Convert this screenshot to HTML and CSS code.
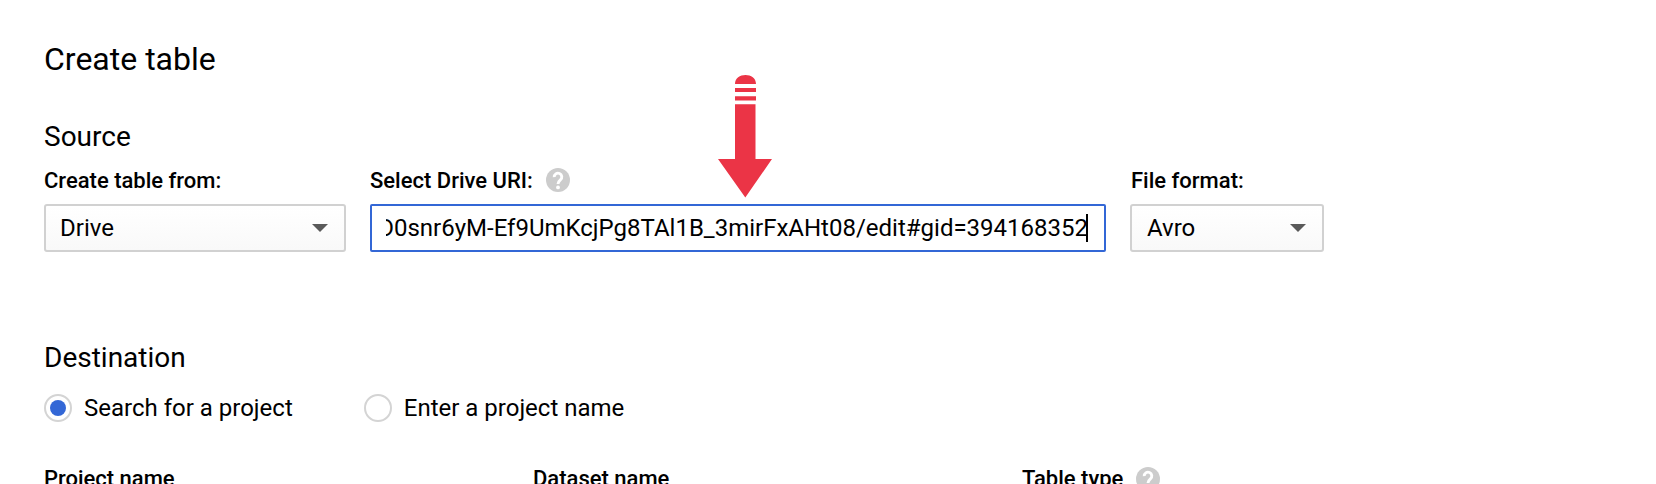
FILE: index.html
```html
<!DOCTYPE html>
<html lang="en">
<head>
<meta charset="utf-8">
<title>Create table</title>
<link rel="stylesheet" href="styles.css">
</head>
<body>
<main class="page">
  <h1 class="title">Create table</h1>
  <section class="source">
    <h2 class="heading">Source</h2>
    <div class="fields">
      <div class="field field-from">
        <div class="label">Create table from:</div>
        <div class="select"><span>Drive</span><svg class="caret-down" viewBox="0 0 16 8"><path d="M0 0h16L8 8z"/></svg></div>
      </div>
      <div class="field field-uri">
        <div class="label">Select Drive URI:
          <svg class="help" viewBox="0 0 24 24"><circle cx="12" cy="12" r="12"/><path d="M8.200 9.200a3.800 3.800 0 1 1 6.200 2.700C13 13.100 12 13.800 12 16"/><circle class="dot" cx="12" cy="19.400" r="1.900"/></svg>
        </div>
        <div class="input"><div class="value"><span class="uri">D0snr6yM-Ef9UmKcjPg8TAl1B_3mirFxAHt08/edit#gid=394168352</span><i class="cursor"></i></div></div>
        <svg class="arrow" viewBox="0 0 54 123"><path d="M17 9C17 3 22 0 27.500 0S38 3 38 9zM17 13h21v4H17zM17 21.300h21v4.300H17zM17 29.300h20.500V84H54L27.300 122.500 0 84h17z"/></svg>
      </div>
      <div class="field field-format">
        <div class="label">File format:</div>
        <div class="select"><span>Avro</span><svg class="caret-down" viewBox="0 0 16 8"><path d="M0 0h16L8 8z"/></svg></div>
      </div>
    </div>
  </section>
  <section class="destination">
    <h2 class="heading">Destination</h2>
    <div class="radios">
      <div class="option"><span class="radio checked"></span><span>Search for a project</span></div>
      <div class="option"><span class="radio"></span><span>Enter a project name</span></div>
    </div>
    <div class="columns">
      <div class="label">Project name</div>
      <div class="label">Dataset name</div>
      <div class="label">Table type
        <svg class="help" viewBox="0 0 24 24"><circle cx="12" cy="12" r="12"/><path d="M8.200 9.200a3.800 3.800 0 1 1 6.200 2.700C13 13.100 12 13.800 12 16"/><circle class="dot" cx="12" cy="19.400" r="1.900"/></svg>
      </div>
    </div>
  </section>
</main>
</body>
</html>
```
FILE: styles.css
```css
* { box-sizing: border-box; }
body {
  margin: 0;
  background: #fff;
  color: #000;
  font-family: Roboto, sans-serif;
  font-size: 24px;
  overflow: hidden;
}
.page { height: 484px; padding: 39px 44px 0; overflow: hidden; }
.title { margin: 0; font-size: 32px; line-height: 40px; font-weight: 400; }
.heading { margin: 0; font-size: 28px; line-height: 32px; font-weight: 400; }
.source { margin-top: 42px; }
.fields { display: flex; gap: 24px; margin-top: 13px; }
.field-from { width: 302px; }
.field-uri { width: 736px; position: relative; }
.field-format { width: 194px; }
.label {
  display: flex;
  align-items: center;
  gap: 13px;
  height: 28px;
  font-size: 22px;
  line-height: 28px;
  font-weight: 500;
  white-space: nowrap;
}
.help { width: 24px; height: 24px; fill: #ccc; }
.help path { fill: none; stroke: #fff; stroke-width: 2.9; }
.help .dot { fill: #fff; }
.fields .label { padding-top: 2px; }
.fields .help { margin-top: -2px; }
.field-format .label { padding-left: 1px; }
.select, .input {
  height: 48px;
  margin-top: 10px;
  border: 2px solid #d1d1d1;
  border-radius: 3px;
}
.select {
  display: flex;
  align-items: center;
  justify-content: space-between;
  padding: 0 16px 0 14px;
  background: linear-gradient(#fff, #f9f9f9);
  line-height: 44px;
}
.field-format .select { padding-left: 15px; }
.caret-down { width: 16px; height: 8px; fill: #5a5a5a; }
.input { padding: 8px 16px 0 14px; border-color: #3367d6; border-radius: 2px; }
.value {
  display: flex;
  justify-content: flex-end;
  height: 28px;
  line-height: 28px;
  white-space: nowrap;
  overflow: hidden;
}
.cursor { flex: none; width: 2px; height: 28px; margin-left: -2px; background: #000; }
.arrow { position: absolute; left: 348px; top: -91px; width: 54px; height: 123px; fill: #eb3446; }
.destination { margin-top: 90px; }
.radios { display: flex; margin-top: 20px; gap: 71px; }
.option { display: flex; align-items: center; gap: 12px; height: 28px; line-height: 28px; }
.radio {
  display: grid;
  place-items: center;
  width: 28px;
  height: 28px;
  border: 2px solid #d4d4d4;
  border-radius: 50%;
}
.checked::after { content: ""; width: 16px; height: 16px; border-radius: 50%; background: #3367d6; }
.columns { display: grid; grid-template-columns: 489px 489px 1fr; margin-top: 43px; }
```
